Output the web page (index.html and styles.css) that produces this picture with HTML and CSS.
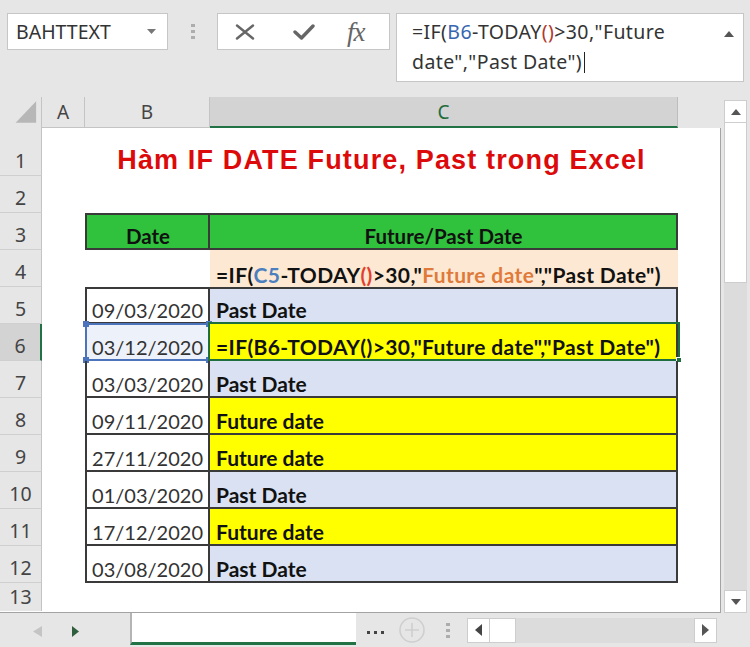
FILE: index.html
```html
<!DOCTYPE html>
<html>
<head>
<meta charset="utf-8">
<link rel="stylesheet" href="styles.css">
</head>
<body>
<div class="toolbar">
  <div class="namebox"><span>BAHTTEXT</span><svg class="dd" width="9" height="5" viewBox="0 0 9 5"><path d="M0 0H9L4.5 5Z" fill="#777"/></svg></div>
  <div class="grip"><i></i><i></i><i></i></div>
  <div class="fnbtns">
    <svg class="ico-x" width="20" height="16" viewBox="0 0 20 16"><path d="M2 1.5L18 14.5M18 1.5L2 14.5" stroke="#666" stroke-width="2.4" stroke-linecap="round" fill="none"/></svg>
    <svg class="ico-ok" width="22" height="16" viewBox="0 0 22 16"><path d="M2 8L8.5 14L20 2" stroke="#666" stroke-width="3.4" stroke-linecap="round" stroke-linejoin="round" fill="none"/></svg>
    <span class="fx">fx</span>
  </div>
  <div class="formula">
    <div class="ftext">=IF(<span class="ref">B6</span>-TODAY<span class="par">()</span>&gt;30,"Future<br>date","Past Date")<span class="caret"></span></div>
    <svg class="up" width="10" height="6" viewBox="0 0 10 6"><path d="M0 6L5 0L10 6Z" fill="#555"/></svg>
  </div>
</div>

<div class="work">
  <div class="sheet">
    <div class="colheads">
      <div class="ch corner"><svg width="42" height="30" viewBox="0 0 42 30"><path d="M37 4V26H16Z" fill="#b7b7b7"/></svg></div>
      <div class="ch">A</div>
      <div class="ch">B</div>
      <div class="ch sel">C</div>
      <div class="ch fill"></div>
    </div>
    <div class="grid">
      <div class="rh">1</div>
      <div class="title">Hàm IF DATE Future, Past trong Excel</div>

      <div class="rh">2</div>

      <div class="rh">3</div>
      <div class="cb hd bt bl br bb">Date</div>
      <div class="cc hd bt br bb">Future/Past Date</div>

      <div class="rh">4</div>
      <div class="cc peach fml">=IF(<span class="f-ref">C5</span>-TODAY<span class="f-par">()</span>&gt;30,"<span class="f-str">Future date</span>","Past Date")</div>

      <div class="rh">5</div>
      <div class="cb bt bl br bb">09/03/2020</div>
      <div class="cc blue bt br bb">Past Date</div>

      <div class="rh active">6</div>
      <div class="cb refcell bl br bb">03/12/2020<span class="refbox"><i class="k1"></i><i class="k2"></i><i class="k3"></i><i class="k4"></i></span></div>
      <div class="cc yellow br bb fml">=IF(B6-TODAY()&gt;30,"Future date","Past Date")<span class="actbox"><i></i></span></div>

      <div class="rh">7</div>
      <div class="cb bl br bb">03/03/2020</div>
      <div class="cc blue br bb">Past Date</div>

      <div class="rh">8</div>
      <div class="cb bl br bb">09/11/2020</div>
      <div class="cc yellow br bb">Future date</div>

      <div class="rh">9</div>
      <div class="cb bl br bb">27/11/2020</div>
      <div class="cc yellow br bb">Future date</div>

      <div class="rh">10</div>
      <div class="cb bl br bb">01/03/2020</div>
      <div class="cc blue br bb">Past Date</div>

      <div class="rh">11</div>
      <div class="cb bl br bb">17/12/2020</div>
      <div class="cc yellow br bb">Future date</div>

      <div class="rh">12</div>
      <div class="cb bl br bb">03/08/2020</div>
      <div class="cc blue br bb">Past Date</div>

      <div class="rh last">13</div>
    </div>
  </div>
  <div class="vscroll">
    <div class="sbtn"><svg width="10" height="6" viewBox="0 0 10 6"><path d="M0 6L5 0L10 6Z" fill="#555"/></svg></div>
    <div class="vthumb"></div>
    <div class="vtrack"></div>
    <div class="sbtn"><svg width="10" height="6" viewBox="0 0 10 6"><path d="M0 0L5 6L10 0Z" fill="#555"/></svg></div>
  </div>
</div>

<div class="tabbar">
  <div class="navs">
    <svg width="9" height="11" viewBox="0 0 9 11"><path d="M9 0V11L0 5.5Z" fill="#c4c4c4"/></svg>
    <svg class="nr" width="7" height="11" viewBox="0 0 7 11"><path d="M0 0V11L7 5.5Z" fill="#2f5e3c"/></svg>
  </div>
  <div class="tab"></div>
  <div class="more"><i></i><i></i><i></i></div>
  <svg class="plus" width="28" height="28" viewBox="0 0 28 28"><circle cx="14" cy="14" r="12" fill="none" stroke="#cfcfcf" stroke-width="1.6"/><path d="M14 7V21M7 14H21" stroke="#cfcfcf" stroke-width="1.6"/></svg>
  <div class="grip2"><i></i><i></i><i></i></div>
  <div class="hscroll">
    <div class="hbtn"><svg width="7" height="12" viewBox="0 0 7 12"><path d="M7 0V12L0 6Z" fill="#444"/></svg></div>
    <div class="hthumb"></div>
    <div class="htrack"></div>
    <div class="hbtn"><svg width="7" height="12" viewBox="0 0 7 12"><path d="M0 0V12L7 6Z" fill="#555"/></svg></div>
  </div>
</div>
</body>
</html>
```

FILE: styles.css
```css
* { box-sizing: border-box; margin: 0; padding: 0; }
html, body { width: 750px; height: 647px; overflow: hidden; }
body { background: #e6e6e6; font-family: "Noto Sans", "Open Sans", sans-serif; color: #333; }

/* ---------- formula bar ---------- */
.toolbar { height: 97px; display: flex; align-items: flex-start; padding-top: 13px; }
.namebox {
  margin-left: 7px; width: 161px; height: 37px; background: #fff; border: 1px solid #c6c6c6;
  display: flex; align-items: center; justify-content: space-between;
  padding: 0 11px 0 8px; font-size: 19.5px; color: #333;
}
.grip { width: 49px; height: 37px; display: flex; flex-direction: column; align-items: center; justify-content: center; gap: 3px; }
.grip i, .grip2 i { display: block; width: 4px; height: 3px; background: #adadad; }
.fnbtns {
  width: 173px; height: 37px; background: #fff; border: 1px solid #c6c6c6;
  display: flex; align-items: center; padding-left: 17px;
}
.ico-ok { margin-left: 38px; }
.fx { margin-left: 32px; font-family: "Liberation Serif", serif; font-style: italic; font-size: 27px; line-height: 30px; color: #666; letter-spacing: -1px; }
.formula {
  margin-left: 6px; width: 348px; height: 69px; background: #fff; border: 1px solid #c6c6c6;
  display: flex; justify-content: space-between; align-items: flex-start; padding: 3px 9px 0 15px;
}
.ftext { font-size: 19.5px; letter-spacing: 0.4px; line-height: 30px; color: #333; }
.ftext .ref { color: #3566b0; }
.ftext .par { color: #b03a2e; }
.caret { display: inline-block; width: 1px; height: 21px; background: #222; vertical-align: -4px; margin-left: 2px; }
.up { margin-top: 14px; }

/* ---------- worksheet ---------- */
.work { display: flex; height: 516px; }
.sheet { width: 721px; }
.colheads { display: grid; grid-template-columns: 42px 43px 125px 468px 43px; height: 30px; }
.ch {
  display: flex; align-items: center; justify-content: center;
  font-size: 19px; color: #444; background: #e6e6e6;
  border-right: 1px solid #c4c4c4; border-bottom: 1px solid #c4c4c4;
}
.ch.corner { align-items: stretch; }
.ch.sel { background: #d3d3d3; color: #1e6b3c; border-bottom: 2px solid #217346; border-right-color: #bdbdbd; }
.ch.fill { border: none; }

.grid {
  display: grid;
  grid-template-columns: 42px 43px 125px 468px 42px;
  grid-template-rows: 49px repeat(11, 37px) 28px;
  background: #fff;
  border-right: 1px solid #a3a3a3; border-bottom: 1px solid #a3a3a3;
  height: 486px;
}
.rh {
  grid-column: 1; display: flex; align-items: flex-end; justify-content: center;
  background: #e6e6e6; color: #444; font-size: 19.5px; line-height: 26px; padding-bottom: 1px;
  border-right: 1px solid #c4c4c4; border-bottom: 1px solid #cfcfcf;
}
.rh.active { background: #d3d3d3; border-right: 2px solid #217346; }
.rh.last { border-bottom: none; }

.title {
  grid-column: 3 / 5; display: flex; align-items: flex-end; justify-content: center; padding-bottom: 0;
  font-family: "Liberation Sans", Arial, sans-serif; font-weight: bold; font-size: 27px; letter-spacing: 1.15px;
  color: #dc0a0a;
}

.cb, .cc {
  display: flex; align-items: flex-end; padding: 0 5px 0 6px;
  font-family: Lato, "Liberation Sans", sans-serif; font-size: 20px; line-height: 24px; color: #222;
  position: relative;
}
.cb { grid-column: 3; justify-content: flex-end; color: #333; }
.cc { grid-column: 4; font-weight: bold; color: #111; font-size: 21px; }
.fml { letter-spacing: 0.38px; white-space: pre; }
.hd { background: #30c13d; justify-content: center; font-weight: bold; color: #111; font-size: 20.5px; padding-bottom: 0; }
.peach { background: #fde9d3; }
.blue { background: #d9e1f2; }
.yellow { background: #ffff00; }
.refcell { background: #edf1f9; }
.f-ref { color: #4a7fc0; }
.f-par { color: #e2402c; }
.f-str { color: #e07a3a; }

.bt { border-top: 2px solid #3a3a3a; }
.bl { border-left: 2px solid #3a3a3a; }
.br { border-right: 2px solid #3a3a3a; }
.bb { border-bottom: 2px solid #3a3a3a; }

/* reference highlight over B6 */
.refbox { position: absolute; left: -2px; top: -1px; right: -2px; bottom: -2px; border: 2px solid #4b74bd; }
.refbox i { position: absolute; width: 6px; height: 6px; background: #4b74bd; }
.refbox .k1 { left: -4px; top: -4px; }
.refbox .k2 { right: -4px; top: -4px; }
.refbox .k3 { left: -4px; bottom: -4px; }
.refbox .k4 { right: -4px; bottom: -4px; }
/* active cell C6 */
.actbox { position: absolute; left: -2px; top: -2px; right: -4px; bottom: -2px; border: 2px solid #1f6e3e; }
.actbox i { position: absolute; right: -4px; bottom: -4px; width: 6px; height: 6px; background: #1f6e3e; border: 1px solid #fff; }

/* vertical scroll bar */
.vscroll { margin-left: 3px; width: 23px; padding-top: 3px; display: flex; flex-direction: column; }
.sbtn { height: 23px; background: #fff; border: 1px solid #cdcdcd; display: flex; align-items: center; justify-content: center; }
.vthumb { height: 160px; background: #fff; border: 1px solid #cdcdcd; border-top: none; }
.vtrack { flex: 1; background: #dcdcdc; }

/* ---------- sheet tabs ---------- */
.tabbar { height: 34px; display: flex; align-items: center; }
.navs { width: 130px; display: flex; align-items: center; padding-left: 33px; padding-top: 2px; }
.navs .nr { margin-left: 30px; }
.tab { width: 226px; align-self: stretch; background: #fff; border-left: 2px solid #b4b4b4; border-bottom: 3px solid #217346; margin-bottom: 2px; }
.more { display: flex; gap: 4px; margin-left: 11px; padding-top: 4px; }
.more i { display: block; width: 3px; height: 3px; background: #444; }
.plus { margin-left: 14px; }
.grip2 { display: flex; flex-direction: column; gap: 3px; margin-left: 20px; }
.hscroll { margin-left: 17px; width: 250px; height: 25px; display: flex; }
.hbtn { width: 23px; background: #fff; border: 1px solid #cdcdcd; display: flex; align-items: center; justify-content: center; }
.hthumb { width: 26px; background: #fff; border: 1px solid #cdcdcd; border-left: none; }
.htrack { flex: 1; background: #dcdcdc; }
```
